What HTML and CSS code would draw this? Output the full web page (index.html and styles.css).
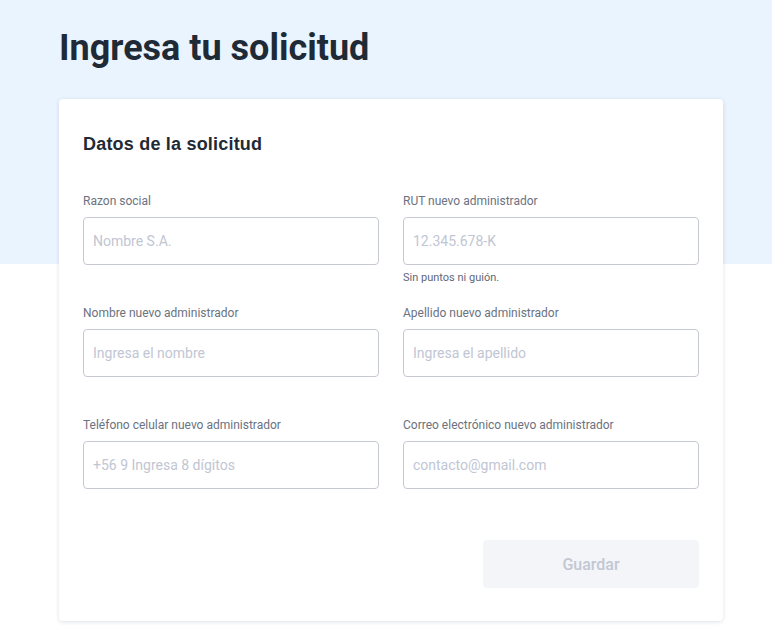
FILE: index.html
```html
<!DOCTYPE html>
<html lang="es">
<head>
<meta charset="utf-8">
<title>Ingresa tu solicitud</title>
<link rel="stylesheet" href="styles.css">
</head>
<body>
<main class="page">
  <h1 class="page-title">Ingresa tu solicitud</h1>
  <section class="card">
    <h2 class="card-title">Datos de la solicitud</h2>
    <form class="form-grid">
      <div class="field">
        <label class="field-label">Razon social</label>
        <input class="field-input" type="text" placeholder="Nombre S.A.">
      </div>
      <div class="field">
        <label class="field-label">RUT nuevo administrador</label>
        <input class="field-input" type="text" placeholder="12.345.678-K">
        <p class="field-help">Sin puntos ni guión.</p>
      </div>
      <div class="field">
        <label class="field-label">Nombre nuevo administrador</label>
        <input class="field-input" type="text" placeholder="Ingresa el nombre">
      </div>
      <div class="field">
        <label class="field-label">Apellido nuevo administrador</label>
        <input class="field-input" type="text" placeholder="Ingresa el apellido">
      </div>
      <div class="field">
        <label class="field-label">Teléfono celular nuevo administrador</label>
        <input class="field-input" type="text" placeholder="+56 9 Ingresa 8 dígitos">
      </div>
      <div class="field">
        <label class="field-label">Correo electrónico nuevo administrador</label>
        <input class="field-input" type="text" placeholder="contacto@gmail.com">
      </div>
    </form>
    <div class="actions">
      <button class="btn-save" type="button" disabled>Guardar</button>
    </div>
  </section>
</main>
</body>
</html>
```

FILE: styles.css
```css
* { box-sizing: border-box; }
html, body { margin: 0; padding: 0; }
body {
  font-family: Roboto, "Liberation Sans", Arial, sans-serif;
  background: linear-gradient(#eaf4fe 0, #eaf4fe 264px, #ffffff 264px);
  min-height: 640px;
  color: #1f2a37;
}
.page {
  width: 664px;
  margin-left: 59px;
  padding-top: 27px;
}
.page-title {
  margin: 0 0 30px 0;
  font-size: 36px;
  line-height: 42px;
  font-weight: 700;
  color: #1f2a37;
}
.card {
  background: #fff;
  border-radius: 4px;
  box-shadow: 0 1px 4px rgba(20, 40, 80, 0.14);
  padding: 33px 24px 33px 24px;
}
.card-title {
  margin: 0 0 36px 0;
  font-family: "Liberation Sans", Arial, sans-serif;
  font-size: 18px;
  line-height: 24px;
  font-weight: 700;
  color: #1f2a37;
  letter-spacing: 0.2px;
}
.form-grid {
  display: grid;
  grid-template-columns: 296px 296px;
  column-gap: 24px;
  row-gap: 19px;
}
.field {
  display: flex;
  flex-direction: column;
  min-height: 93px;
}
.field-label {
  font-size: 12px;
  line-height: 18px;
  color: #6b7280;
  margin-bottom: 7px;
}
.field-input {
  height: 48px;
  border: 1px solid #c5c9d2;
  border-radius: 4px;
  padding: 0 9px;
  font-family: Roboto, sans-serif;
  font-size: 14px;
  color: #1f2a37;
  background: #fff;
  outline: none;
}
.field-input::placeholder { color: #c1c6d3; }
.field-help {
  margin: 6px 0 0 0;
  font-size: 11px;
  line-height: 14px;
  color: #5f6877;
}
.actions {
  display: flex;
  justify-content: flex-end;
  margin-top: 31px;
}
.btn-save {
  width: 216px;
  height: 48px;
  border: none;
  border-radius: 4px;
  background: #f4f5f8;
  color: #c2c7d3;
  font-family: Roboto, sans-serif;
  font-size: 16px;
  font-weight: 500;
}
```
